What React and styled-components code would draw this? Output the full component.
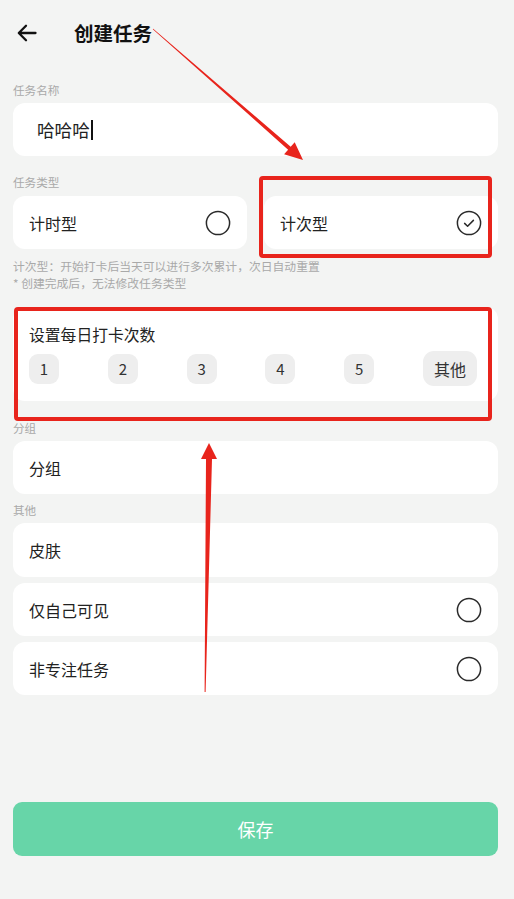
import React from "react";
import styled, { createGlobalStyle } from "styled-components";

const GlobalStyle = createGlobalStyle`
  html, body {
    margin: 0;
    padding: 0;
    background: #f3f4f3;
  }
  body {
    font-family: "Noto Sans CJK SC", "Noto Sans", Roboto, sans-serif;
    color: #222;
  }
`;

const Page = styled.div`
  position: relative;
  width: 514px;
  height: 899px;
  box-sizing: border-box;
  padding: 0 16px 0 13px;
  display: flex;
  flex-direction: column;
  overflow: hidden;
`;

const Header = styled.div`
  height: 66px;
  display: flex;
  align-items: center;
`;

const BackButton = styled.button`
  width: 22px;
  height: 22px;
  margin-left: 3px;
  padding: 0;
  border: 0;
  background: none;
  display: flex;
  align-items: center;
  justify-content: center;
`;

const Title = styled.h1`
  margin: 0 0 0 36px;
  font-size: 19.5px;
  font-weight: 700;
  color: #111;
  line-height: 26px;
`;

const Label = styled.div`
  margin-top: ${(p) => p.$top}px;
  font-size: 11.6px;
  line-height: 18px;
  color: #a9a9a9;
`;

const Card = styled.div`
  margin-top: ${(p) => p.$top || 0}px;
  height: ${(p) => p.$h || 53}px;
  box-sizing: border-box;
  padding: 0 16px 0 ${(p) => p.$pl || 16}px;
  background: #fff;
  border-radius: 12px;
  display: flex;
  align-items: center;
  justify-content: space-between;
  font-size: 16px;
  color: #222;
`;

const NameText = styled.span`
  font-size: 17.6px;
  display: flex;
  align-items: center;
`;

const Caret = styled.span`
  width: 2px;
  height: 20px;
  background: #111;
  margin-left: 1px;
`;

const TypeRow = styled.div`
  margin-top: 5px;
  display: grid;
  grid-template-columns: 1fr 1fr;
  gap: 17px;
`;

const Hint = styled.div`
  margin-top: 8px;
  font-size: 11.8px;
  line-height: 17px;
  color: #a9a9a9;
`;

const CountCard = styled.div`
  margin-top: 16px;
  padding: 18px 21px 15px 16px;
  background: #fff;
  border-radius: 12px;
`;

const CountTitle = styled.div`
  font-size: 15.8px;
  line-height: 20px;
  color: #222;
`;

const ChipRow = styled.div`
  margin-top: 6px;
  height: 35px;
  display: flex;
  align-items: center;
  justify-content: space-between;
`;

const Chip = styled.button`
  width: ${(p) => (p.$wide ? 54 : 30)}px;
  height: ${(p) => (p.$wide ? 35 : 30)}px;
  padding: 0;
  border: 0;
  border-radius: ${(p) => (p.$wide ? 11 : 9)}px;
  background: #eeeeee;
  font-family: inherit;
  font-size: ${(p) => (p.$wide ? 16 : 15)}px;
  color: #333;
  display: flex;
  align-items: center;
  justify-content: center;
`;

const List = styled.div`
  margin-top: 4px;
  display: flex;
  flex-direction: column;
  gap: 6px;
`;

const SaveButton = styled.button`
  margin-top: 107px;
  height: 54px;
  border: 0;
  border-radius: 9px;
  background: #67d5a8;
  color: #fff;
  font-family: inherit;
  font-size: 18px;
  letter-spacing: 0;
`;

const Overlay = styled.svg`
  position: absolute;
  left: 0;
  top: 0;
  width: 514px;
  height: 899px;
  pointer-events: none;
`;

const Radio = ({ checked }) => (
  <svg width="26" height="26" viewBox="0 0 26 26">
    <circle cx="13" cy="13" r="11.6" fill="none" stroke="#2a2a2a" strokeWidth="1.5" />
    {checked && (
      <path
        d="M8.6 13.4 L11.6 16.3 L17.4 10.4"
        fill="none"
        stroke="#2a2a2a"
        strokeWidth="1.5"
        strokeLinecap="round"
        strokeLinejoin="round"
      />
    )}
  </svg>
);

const BackIcon = () => (
  <svg width="22" height="22" viewBox="0 0 22 22">
    <path
      d="M19.5 11 H3 M10 3.8 L2.8 11 L10 18.2"
      fill="none"
      stroke="#111"
      strokeWidth="2.3"
      strokeLinecap="round"
      strokeLinejoin="round"
    />
  </svg>
);

const RED = "#e8241c";

const Annotations = () => (
  <Overlay viewBox="0 0 514 899">
    <rect x="261" y="178" width="229" height="78" rx="2" fill="none" stroke={RED} strokeWidth="4" />
    <rect x="16" y="309" width="474" height="110" rx="2" fill="none" stroke={RED} strokeWidth="4" />
    <polygon
      points="152.8,29.2 288.1,149.7 284.1,154.2 303,160 294.7,142.2 290.7,146.7 153.2,28.8"
      fill={RED}
    />
    <polygon
      points="201,459 209,443 217,459 212,459 205.6,692 204.6,692 206,459"
      fill={RED}
    />
  </Overlay>
);

const counts = ["1", "2", "3", "4", "5"];

export default function App() {
  return (
    <>
      <GlobalStyle />
      <Page>
        <Header>
          <BackButton>
            <BackIcon />
          </BackButton>
          <Title>创建任务</Title>
        </Header>

        <Label $top={15}>任务名称</Label>
        <Card $top={4} $pl={24}>
          <NameText>
            哈哈哈
            <Caret />
          </NameText>
        </Card>

        <Label $top={17}>任务类型</Label>
        <TypeRow>
          <Card>
            <span>计时型</span>
            <Radio />
          </Card>
          <Card>
            <span>计次型</span>
            <Radio checked />
          </Card>
        </TypeRow>
        <Hint>
          计次型：开始打卡后当天可以进行多次累计，次日自动重置
          <br />* 创建完成后，无法修改任务类型
        </Hint>

        <CountCard>
          <CountTitle>设置每日打卡次数</CountTitle>
          <ChipRow>
            {counts.map((c) => (
              <Chip key={c}>{c}</Chip>
            ))}
            <Chip $wide>其他</Chip>
          </ChipRow>
        </CountCard>

        <Label $top={18}>分组</Label>
        <Card $top={4}>
          <span>分组</span>
        </Card>

        <Label $top={7}>其他</Label>
        <List>
          <Card $h={54}>
            <span>皮肤</span>
          </Card>
          <Card>
            <span>仅自己可见</span>
            <Radio />
          </Card>
          <Card>
            <span>非专注任务</span>
            <Radio />
          </Card>
        </List>

        <SaveButton>保存</SaveButton>
        <Annotations />
      </Page>
    </>
  );
}
